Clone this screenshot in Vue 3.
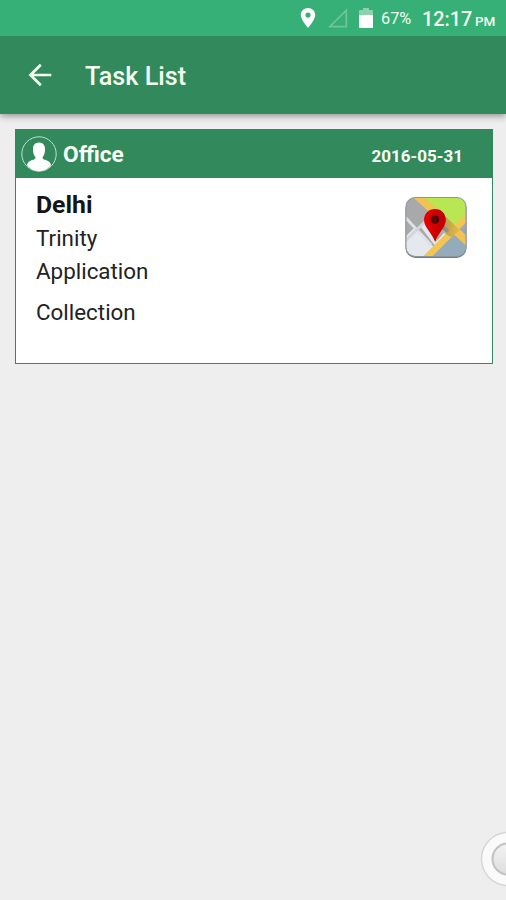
<script setup>
const task = {
  place: 'Office',
  date: '2016-05-31',
  city: 'Delhi',
  lines: ['Trinity', 'Application', 'Collection'],
}
</script>

<template>
  <div class="screen">
    <div class="status">
      <svg class="loc" width="16" height="20" viewBox="0 0 16 20">
        <path fill="#fff" fill-rule="evenodd" d="M8 0C3.9 0 .8 3.100.8 7.100C.8 12 8 20 8 20S15.200 12 15.200 7.100C15.200 3.100 12.100 0 8 0ZM8 4.500a2.600 2.600 0 1 1 0 5.200a2.600 2.600 0 0 1 0-5.200Z" />
      </svg>
      <svg class="signal" width="20" height="20" viewBox="0 0 20 20">
        <path d="M1.800 18.700L18.300 2.300V18.700Z" fill="none" stroke="#6cc697" stroke-width="1.700" />
      </svg>
      <svg class="battery" width="14" height="21" viewBox="0 0 14 21">
        <path fill="#8bd3ad" d="M4 0h6v2h3q1 0 1 1v5H0V3q0-1 1-1h3Z" />
        <path fill="#fff" d="M0 7h14v12q0 1-1 1H1q-1 0-1-1Z" />
      </svg>
      <span class="percent">67%</span>
      <span class="clock">12:17</span>
      <span class="ampm">PM</span>
    </div>
    <header class="appbar">
      <svg class="back" width="24" height="24" viewBox="0 0 24 24">
        <path d="M23.300 12H2.700M12.800 1.700L2.500 12L12.800 22.300" fill="none" stroke="#f4fff0" stroke-width="2.700" />
      </svg>
      <h1>Task List</h1>
    </header>
    <main>
      <article class="card">
        <div class="card-head">
          <svg class="avatar" width="36" height="36" viewBox="0 0 36 36">
            <circle cx="18" cy="18" r="17.200" fill="none" stroke="#c3dfd0" stroke-width="1" />
            <path fill="#fff" d="M18 6.500c-4 0-6.200 2.800-6 6.800c0 4.200 1 6.300 2.400 7.600c.2 1.600-.6 2.200-2.200 2.900C9 24.800 7 25.500 6 29C9 33.300 13.600 35.200 18 35.200S27 33.300 30 29C29 25.500 27 24.800 23.800 23.800c-1.600-.7-2.400-1.300-2.200-2.900c1.400-1.300 2.400-3.400 2.400-7.600c.2-4-2-6.800-6-6.800Z" />
          </svg>
          <h2>{{ task.place }}</h2>
          <time>{{ task.date }}</time>
        </div>
        <div class="card-body">
          <div class="details">
            <h3>{{ task.city }}</h3>
            <p v-for="line in task.lines" :key="line">{{ line }}</p>
          </div>
          <svg class="map" width="64" height="64" viewBox="0 0 64 64">
            <defs>
              <clipPath id="tile"><rect x="2" y="1.500" width="60" height="58.500" rx="9" /></clipPath>
              <linearGradient id="pin" x1="0" x2="1"><stop offset="0" stop-color="#e80000" /><stop offset="1" stop-color="#b90003" /></linearGradient>
              <linearGradient id="shade" x1="0" x2="1"><stop offset="0" stop-color="#6b6040" stop-opacity=".55" /><stop offset="1" stop-color="#6b6040" stop-opacity=".1" /></linearGradient>
            </defs>
            <rect x="1.500" y="2" width="61" height="60" rx="10" fill="#737b81" />
            <g clip-path="url(#tile)">
              <rect width="64" height="64" fill="#a8a9ab" />
              <path fill="#b9e653" d="M20 0H64V22L50 36L22 10Z" />
              <path fill="#94abbb" d="M64 29V64H27L47 43Z" />
              <path fill="#e5e8ee" d="M0 42L10 32L31 52L22 64H0Z" />
              <path fill="#e5e8ee" d="M16 30L24 22L44 38L32 51Z" />
              <path d="M0 20L27 49" stroke="#dfe1e5" stroke-width="3" />
              <path d="M0 46L25 22" stroke="#d3d6db" stroke-width="3" />
              <path d="M11 -2L66 48" stroke="#f3c352" stroke-width="7.500" />
              <path d="M67 17L21 63" stroke="#f4c650" stroke-width="6.500" />
              <path fill="url(#shade)" d="M31.500 46L41 20L56 34L47 41L40 37Z" />
            </g>
            <rect x="2" y="1.500" width="60" height="59" rx="9" fill="none" stroke="#8f969b" stroke-width="1" />
            <path fill="url(#pin)" d="M31 13C24.500 13 20 17.800 20 24C20 31 28 37 31.200 46C34 37 41.800 31 41.800 24C41.800 17.800 37.500 13 31 13Z" />
            <circle cx="31" cy="23.500" r="4.300" fill="#560008" />
          </svg>
        </div>
      </article>
    </main>
    <svg class="assist" width="28" height="60" viewBox="0 0 28 60">
      <defs>
        <linearGradient id="knob" x1="0" y1="0" x2="0" y2="1"><stop offset="0" stop-color="#f3f3f3" /><stop offset="1" stop-color="#dedede" /></linearGradient>
      </defs>
      <circle cx="30" cy="30" r="26.500" fill="#fafafa" stroke="#d6d6d6" stroke-width="1.500" />
      <circle cx="30" cy="30" r="15.500" fill="url(#knob)" stroke="#c2c2c2" stroke-width="2" />
    </svg>
  </div>
</template>

<style>
body { background: #eee; }
</style>

<style scoped>
.screen {
  position: relative;
  width: 506px;
  height: 900px;
  overflow: hidden;
  background: #eee;
  font-family: Roboto, sans-serif;
}
h1, h2, h3, p { margin: 0; }
.status {
  position: relative;
  z-index: 1;
  display: flex;
  align-items: center;
  height: 36px;
  box-sizing: border-box;
  padding-left: 300px;
  background: #36b077;
  color: #f4fff0;
  white-space: nowrap;
}
.signal { margin-left: 12px; }
.battery { margin-left: 11px; }
.percent { width: 41px; margin-left: 8px; font-size: 16.300px; line-height: 36px; padding-top: 2px; box-sizing: border-box; }
.clock { width: 53px; font-size: 19.800px; font-weight: 500; line-height: 36px; padding-top: 3px; }
.ampm { font-size: 13.500px; font-weight: 500; line-height: 36px; padding-top: 5px; }
.appbar {
  display: flex;
  align-items: center;
  height: 78px;
  padding-left: 28px;
  background: #32895b;
  box-shadow: 0 2px 7px rgba(0, 0, 0, .4);
}
h1 {
  margin: 3px 0 0 33px;
  color: #f4fff0;
  font-size: 25.200px;
  font-weight: 500;
  line-height: 30px;
}
main { padding: 15px 13.500px 0 15px; }
.card {
  height: 235px;
  box-sizing: border-box;
  border: 1px solid #32895b;
  background: #fff;
}
.card-head {
  display: flex;
  align-items: center;
  height: 48px;
  padding: 0 28.500px 0 5px;
  background: #32895b;
  color: #f8fff5;
}
.avatar { margin-bottom: 1px; }
h2 { margin: 1px 0 0 6px; font-size: 22.700px; font-weight: 700; line-height: 28px; }
time { margin: 3px 0 0 auto; font-size: 17px; font-weight: 700; line-height: 22px; }
.card-body {
  display: flex;
  justify-content: space-between;
  padding: 12px 23.500px 0 20px;
}
.map { margin-top: 6px; }
h3 { margin-top: 1px; color: #151515; font-size: 24.800px; font-weight: 700; line-height: 28px; }
p { color: #222; font-size: 22.400px; line-height: 33px; }
h3 + p { margin-top: 3px; }
p:last-child { margin-top: 8px; }
.assist { position: absolute; right: 0; top: 829px; }
</style>
